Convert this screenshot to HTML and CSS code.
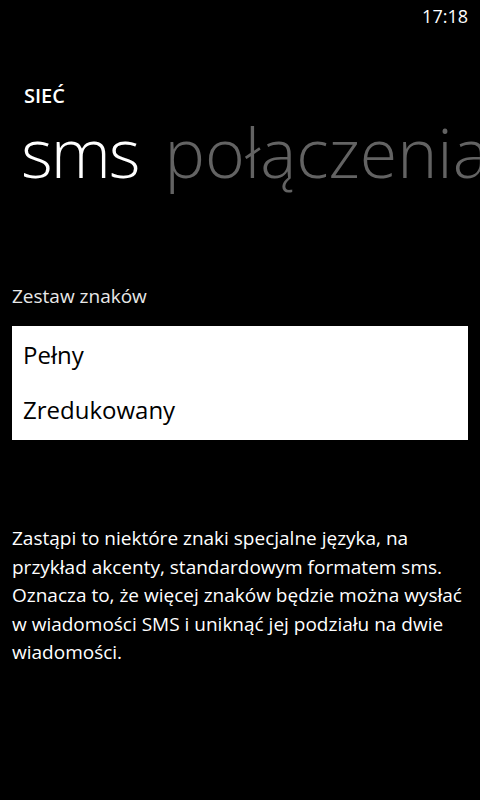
FILE: index.html
```html
<!DOCTYPE html>
<html lang="pl">
<head>
<meta charset="utf-8">
<title>SIEĆ</title>
<link rel="stylesheet" href="styles.css">
</head>
<body>
<div class="phone">
  <div class="status"><span class="time">17:18</span></div>
  <div class="app-title">SIEĆ</div>
  <div class="pivot">
    <span class="pivot-item active">sms</span>
    <span class="pivot-item">połączenia</span>
  </div>
  <div class="content">
    <div class="label">Zestaw znaków</div>
    <div class="listbox">
      <div class="option">Pełny</div>
      <div class="option">Zredukowany</div>
    </div>
    <p class="desc">Zastąpi to niektóre znaki specjalne języka, na przykład akcenty, standardowym formatem sms. Oznacza to, że więcej znaków będzie można wysłać w wiadomości SMS i uniknąć jej podziału na dwie wiadomości.</p>
  </div>
</div>
</body>
</html>
```
FILE: styles.css
```css
html, body {
  margin: 0;
  padding: 0;
  background: #000;
}
.phone {
  width: 480px;
  height: 800px;
  overflow: hidden;
  background: #000;
  color: #fff;
  font-family: "Open Sans", "Noto Sans", sans-serif;
}
.status {
  height: 32px;
  display: flex;
  justify-content: flex-end;
  align-items: center;
  padding-right: 12px;
}
.time {
  font-size: 18px;
  line-height: 32px;
}
.app-title {
  margin-top: 54px;
  padding-left: 24px;
  font-size: 20px;
  font-weight: 600;
  line-height: 20px;
}
.pivot {
  white-space: nowrap;
  padding-left: 21px;
  margin-top: 8px;
  display: flex;
  gap: 26px;
  font-size: 68px;
  font-weight: 300;
  line-height: 76px;
}
.pivot-item {
  color: #636363;
  letter-spacing: 0;
}
.pivot-item.active {
  color: #fff;
  letter-spacing: -2px;
}
.content {
  padding: 0 12px;
  margin-top: 92px;
}
.label {
  font-size: 19px;
  line-height: 28px;
  color: #e8e8e8;
}
.listbox {
  margin-top: 16px;
  background: #fff;
  color: #000;
  padding: 1px 11px 0;
  height: 114px;
  box-sizing: border-box;
}
.option {
  font-size: 24px;
  line-height: 55px;
}
.desc {
  margin: 84px 0 0 0;
  font-size: 19px;
  line-height: 28.5px;
}
```
